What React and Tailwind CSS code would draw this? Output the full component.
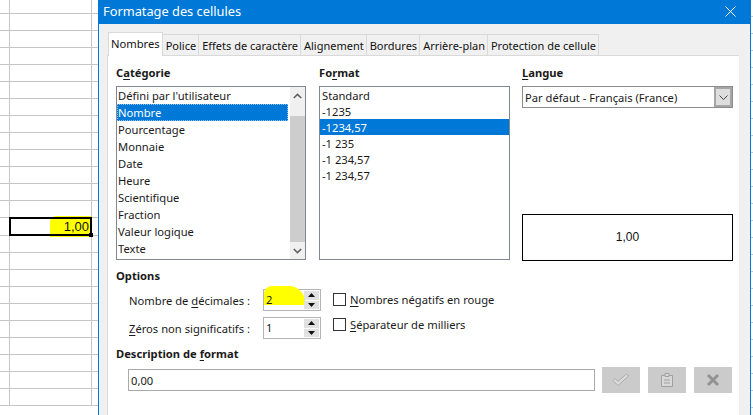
import React from "react";

const rowsTop = Array.from({ length: 12 }, (_, i) => i);
const rowsBottom = Array.from({ length: 10 }, (_, i) => i);

function SheetRow() {
  return (
    <div className="grid h-[17px] grid-cols-[10px_82px_6px] border-b border-[#c6c6c6]">
      <div className="border-r border-[#c6c6c6]" />
      <div className="border-r border-[#c6c6c6]" />
      <div />
    </div>
  );
}

function U({ children }) {
  return <span className="underline underline-offset-2">{children}</span>;
}

function Tab({ children, active }) {
  return active ? (
    <div className="relative z-10 -mb-px flex h-[24px] items-center border border-b-0 border-[#d9d9d9] bg-white px-[2px] pb-[2px] text-[11.2px] text-[#111]">
      {children}
    </div>
  ) : (
    <div className="mt-[2px] flex h-[21px] items-center border border-l-0 border-b-0 border-[#d9d9d9] bg-[#f0f0f0] pl-[3px] pr-[2px] text-[11px] text-[#111]">
      {children}
    </div>
  );
}

function Caret({ down }) {
  return (
    <svg width="7" height="4" viewBox="0 0 7 4">
      {down ? <path d="M0 0h7L3.5 4z" fill="#111" /> : <path d="M0 4h7L3.5 0z" fill="#111" />}
    </svg>
  );
}

function Chevron({ down }) {
  return (
    <svg width="9" height="6" viewBox="0 0 9 6" fill="none" stroke="#606060" strokeWidth="1.6">
      {down ? <path d="M.8 1l3.7 3.6L8.2 1" /> : <path d="M.8 5l3.7-3.6L8.2 5" />}
    </svg>
  );
}

function Spin({ value, hl }) {
  return (
    <div className="relative flex h-[22px] w-[58px] items-center justify-between border border-[#b4b4b4] bg-white pr-[1px]">
      {hl && <div className="absolute -top-[4px] left-0 h-[19px] w-[41px] rounded-tr-[16px] rounded-tl-[8px] bg-[#ffff00]" />}
      <span className="relative pl-[2px] leading-none">{value}</span>
      <div className="relative flex h-[18px] w-[15px] flex-col gap-[1px]">
        <div className="flex flex-1 items-center justify-center bg-[#e1e1e1]"><Caret /></div>
        <div className="flex flex-1 items-center justify-center bg-[#e1e1e1]"><Caret down /></div>
      </div>
    </div>
  );
}

function Check({ children }) {
  return (
    <div className="flex items-center gap-[4px]">
      <div className="h-[13px] w-[13px] border border-[#333] bg-white" />
      <span>{children}</span>
    </div>
  );
}

function ActionBtn({ children }) {
  return (
    <div className="flex h-[26px] w-[38px] items-center justify-center bg-[#cbcbcb]">{children}</div>
  );
}

const cats = ["Défini par l'utilisateur", "Nombre", "Pourcentage", "Monnaie", "Date", "Heure", "Scientifique", "Fraction", "Valeur logique", "Texte"];
const fmts = ["Standard", "-1235", "-1234,57", "-1 235", "-1 234,57", "-1 234,57"];

export default function App() {
  return (
    <div className="flex h-[415px] w-[753px] overflow-hidden bg-white font-['Noto_Sans',sans-serif] text-[11.2px] leading-[17px] text-[#1a1a1a]">
      <div className="relative w-[98px] shrink-0">
        <div className="grid h-[14px] grid-cols-[10px_82px_6px] border-b border-[#c6c6c6]">
          <div className="border-r border-[#c6c6c6]" />
          <div className="border-r border-[#c6c6c6]" />
          <div />
        </div>
        {rowsTop.map((i) => <SheetRow key={i} />)}
        <div className="relative h-[17px]">
          <div className="absolute -top-[2px] left-[50px] h-[21px] w-[41px] rounded-tl-[6px] bg-[#ffff00]" />
          <div className="absolute -top-px left-[9px] z-10 flex h-[19px] w-[83px] items-center justify-end border-2 border-black pr-px">
            <span className="relative font-['Liberation_Sans',sans-serif] text-[13px] text-[#111]">1,00</span>
            <div className="absolute -bottom-[3px] -right-[3px] h-[4px] w-[4px] bg-black" />
          </div>
        </div>
        <div className="border-t border-[#c6c6c6]" />
        {rowsBottom.map((i) => <SheetRow key={i} />)}
      </div>

      <div className="flex w-[653px] shrink-0 flex-col border-x border-[#0078d7] bg-[#f0f0f0]">
        <div className="flex h-[24px] shrink-0 items-center justify-between bg-[#0078d7] pb-[2px] pl-[4px] pr-[14px] text-[12.8px] text-white">
          <span>Formatage des cellules</span>
          <svg width="11" height="11" viewBox="0 0 11 11" stroke="#fff" strokeWidth="1"><path d="M.5.5l10 10M10.5.5l-10 10" /></svg>
        </div>
        <div className="flex-1 pl-[8px] pr-[11px] pt-[8px]">
          <div className="flex h-[23px] items-end pl-px">
            <Tab active>Nombres</Tab>
            <Tab>Police</Tab>
            <Tab>Effets de caractère</Tab>
            <Tab>Alignement</Tab>
            <Tab>Bordures</Tab>
            <Tab>Arrière-plan</Tab>
            <Tab>Protection de cellule</Tab>
          </div>
          <div className="h-[360px] border-l border-t border-[#d9d9d9] bg-white pl-[8px] pr-[5px] pt-[8px]">
            <div className="flex">
              <div className="mr-[13px] w-[190px]">
                <div className="mb-[5px] font-bold">C<U>a</U>tégorie</div>
                <div className="flex h-[174px] border border-[#828790] bg-white">
                  <div className="flex-1 pr-[2px]">
                    {cats.map((c, i) => (
                      <div key={c} className={i === 1 ? "h-[17px] border border-dotted border-[#8fc0ea] bg-[#0078d7] leading-[15px] text-white" : "h-[17px] pl-[1px]"}>{c}</div>
                    ))}
                  </div>
                  <div className="flex w-[15px] flex-col bg-[#f0f0f0]">
                    <div className="flex h-[17px] items-center justify-center"><Chevron /></div>
                    <div className="mt-[12px] h-[126px] bg-[#cdcdcd]" />
                    <div className="mt-auto flex h-[17px] items-center justify-center"><Chevron down /></div>
                  </div>
                </div>
              </div>
              <div className="mr-[12px] w-[191px]">
                <div className="mb-[5px] font-bold">Fo<U>r</U>mat</div>
                <div className="h-[174px] border border-[#828790] bg-white">
                  {fmts.map((c, i) => (
                    <div key={i} className={i === 2 ? "h-[16px] bg-[#0078d7] pl-[2px] text-white" : "h-[16px] pl-[2px]"}>{c}</div>
                  ))}
                </div>
              </div>
              <div className="flex w-[211px] flex-col">
                <div className="mb-[5px] font-bold"><U>L</U>angue</div>
                <div className="flex h-[22px] items-center justify-between border border-[#8c8c8c] bg-white pl-[2px]">
                  <span>Par défaut - Français (France)</span>
                  <div className="flex h-[20px] w-[18px] items-center justify-center border-2 border-[#a6a6a6] bg-[#dedede]">
                    <svg width="9" height="5" viewBox="0 0 9 5" fill="none" stroke="#444"><path d="M.5.5l4 4 4-4" /></svg>
                  </div>
                </div>
                <div className="mt-[106px] flex h-[47px] items-center justify-center border border-black font-['Liberation_Sans',sans-serif] text-[12px] text-[#111]">1,00</div>
              </div>
            </div>

            <div className="mt-[6px] font-bold">Options</div>
            <div className="mt-[5px] flex gap-[12px]">
              <div className="flex w-[205px] flex-col gap-[6px]">
                <div className="flex h-[22px] items-center justify-end gap-[13px]">
                  <span>Nombre de <U>d</U>écimales :</span>
                  <Spin value="2" hl />
                </div>
                <div className="flex h-[22px] items-center justify-end gap-[13px]">
                  <span><U>Z</U>éros non significatifs :</span>
                  <Spin value="1" />
                </div>
              </div>
              <div className="flex flex-col gap-[8px] pt-[2px]">
                <Check><U>N</U>ombres négatifs en rouge</Check>
                <Check><U>S</U>éparateur de milliers</Check>
              </div>
            </div>
            <div className="mt-[6px] font-bold">Description de <U>f</U>ormat</div>
            <div className="mt-[5px] flex items-center gap-[7px] pl-[12px]">
              <div className="flex h-[22px] w-[467px] items-center border border-[#a8a8a8] bg-white pl-[2px]">0,00</div>
              <div className="flex gap-[8px]">
                <ActionBtn>
                  <svg width="18" height="14" viewBox="0 0 18 14" fill="#dcdcdc" stroke="#ababab"><path d="M1 7.5l2-2 3 3L14.5 1l2 2L6 12.5z" /></svg>
                </ActionBtn>
                <ActionBtn>
                  <svg width="14" height="16" viewBox="0 0 14 16" fill="#d8d8d8" stroke="#a0a0a0"><path d="M1.5 3.5h11v11h-11z" /><path d="M5 1.5h4v3H5zM4 8h6M4 11h6" /></svg>
                </ActionBtn>
                <ActionBtn>
                  <svg width="14" height="14" viewBox="0 0 14 14" stroke="#929292" strokeWidth="3"><path d="M2 2l10 10M12 2L2 12" /></svg>
                </ActionBtn>
              </div>
            </div>
          </div>
        </div>
      </div>

      <div className="flex-1">
        {Array.from({ length: 24 }, (_, i) => (
          <div key={i} className="h-[17px] border-b border-[#c6c6c6]" />
        ))}
      </div>
    </div>
  );
}
